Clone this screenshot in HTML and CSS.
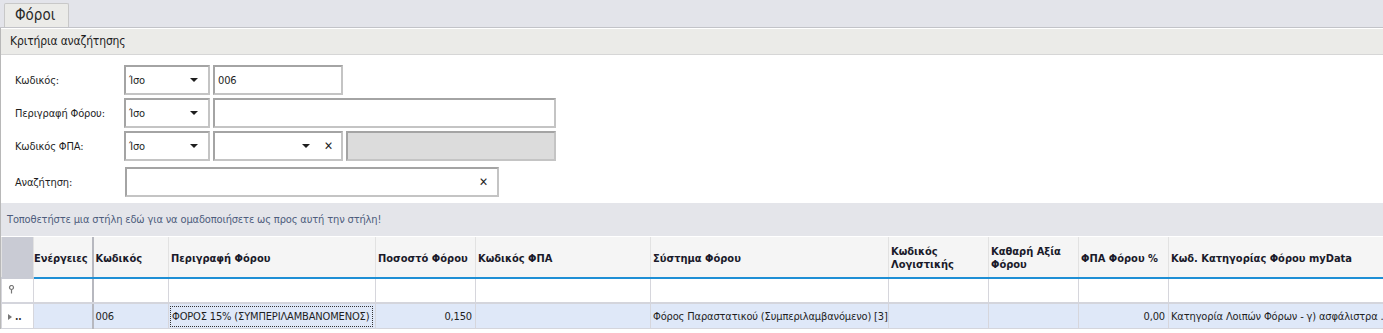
FILE: index.html
```html
<!DOCTYPE html>
<html>
  <head>
    <title>Φόροι</title>
    <link rel="stylesheet" href="styles.css">
  </head>
  <body>
    <div class="tabs">
      <div class="tab">Φόροι</div>
    </div>

    <div class="panel">
      <div class="panel-title">Κριτήρια αναζήτησης</div>

      <div class="criteria">
        <div class="crow">
          <label class="clabel">Κωδικός:</label>
          <div class="box op">Ίσο<span class="arrow"></span></div>
          <div class="box val-short">006</div>
        </div>
        <div class="crow">
          <label class="clabel">Περιγραφή Φόρου:</label>
          <div class="box op">Ίσο<span class="arrow"></span></div>
          <div class="box val-long"></div>
        </div>
        <div class="crow">
          <label class="clabel">Κωδικός ΦΠΑ:</label>
          <div class="box op">Ίσο<span class="arrow"></span></div>
          <div class="box val-short combo"><span class="arrow"></span><span class="clear">✕</span></div>
          <div class="box val-disabled"></div>
        </div>
        <div class="crow search">
          <label class="clabel">Αναζήτηση:</label>
          <div class="box val-search"><span class="clear">✕</span></div>
        </div>
      </div>

      <div class="group-panel">Τοποθετήστε μια στήλη εδώ για να ομαδοποιήσετε ως προς αυτή την στήλη!</div>

      <table class="grid">
        <colgroup>
          <col style="width: 32px">
          <col style="width: 59px">
          <col style="width: 76px">
          <col style="width: 207px">
          <col style="width: 100px">
          <col style="width: 175px">
          <col style="width: 238px">
          <col style="width: 100px">
          <col style="width: 90px">
          <col style="width: 90px">
          <col>
        </colgroup>
        <tr class="head">
          <th class="ind"></th>
          <th class="sep">Ενέργειες</th>
          <th>Κωδικός</th>
          <th>Περιγραφή Φόρου</th>
          <th>Ποσοστό Φόρου</th>
          <th>Κωδικός ΦΠΑ</th>
          <th>Σύστημα Φόρου</th>
          <th>Κωδικός Λογιστικής</th>
          <th>Καθαρή Αξία Φόρου</th>
          <th>ΦΠΑ Φόρου %</th>
          <th>Κωδ. Κατηγορίας Φόρου myData</th>
        </tr>
        <tr class="filter">
          <td class="ind">
            <svg width="7" height="9" viewBox="0 0 7 9"><circle cx="3.5" cy="2.5" r="2" fill="none" stroke="#777" stroke-width="1.2"/><line x1="3.5" y1="4.5" x2="3.5" y2="8.5" stroke="#777" stroke-width="1.2"/></svg>
          </td>
          <td class="sep"></td>
          <td></td><td></td><td></td><td></td><td></td><td></td><td></td><td></td><td></td>
        </tr>
        <tr class="row">
          <td class="ind"><span class="tri"></span><span class="dots">..</span></td>
          <td class="sep"></td>
          <td>006</td>
          <td><span class="focus">ΦΟΡΟΣ 15% (ΣΥΜΠΕΡΙΛΑΜΒΑΝΟΜΕΝΟΣ)</span></td>
          <td class="num">0,150</td>
          <td></td>
          <td>Φόρος Παραστατικού (Συμπεριλαμβανόμενο) [3]</td>
          <td></td>
          <td></td>
          <td class="num">0,00</td>
          <td>Κατηγορία Λοιπών Φόρων - γ) ασφάλιστρα .</td>
        </tr>
      </table>
    </div>
  </body>
</html>
```

FILE: styles.css
```css
body {
  margin: 0;
  font-family: "DejaVu Sans Condensed", "DejaVu Sans", sans-serif;
  font-size: 11px;
  letter-spacing: -0.15px;
  color: #1e1e1e;
  background-color: #fff;
  overflow: hidden;
}

.tabs {
  height: 27px;
  background-color: #e3e4ea;
  border-bottom: 1px solid #c2c3c8;
  display: flex;
  align-items: flex-end;
  padding-left: 4px;
}

.tab {
  width: 65px;
  height: 24px;
  box-sizing: border-box;
  background-color: #ebebe8;
  border: 1px solid #c8c8c8;
  border-bottom: none;
  border-radius: 2px 2px 0 0;
  font-size: 15px;
  letter-spacing: 0;
  line-height: 23px;
  padding-left: 10px;
  color: #2a2a2a;
}

.panel {
  border-left: 1px solid #b8b8b8;
}

.panel-title {
  height: 25px;
  line-height: 25px;
  background-color: #ebebe8;
  border-top: 1px solid #fff;
  border-bottom: 1px solid #d6d6d6;
  padding-left: 9px;
  font-size: 12px;
}

.criteria {
  padding: 10px 0 3px 0;
}

.crow {
  display: flex;
  align-items: center;
  gap: 3px;
  height: 30px;
  margin-bottom: 3px;
}

.clabel {
  width: 120px;
  padding-left: 14px;
  box-sizing: border-box;
  white-space: nowrap;
}

.box {
  height: 30px;
  box-sizing: border-box;
  border: 2px solid #a9a9a9;
  border-color: #a4a4a4 #c4c4c4 #c4c4c4 #a4a4a4;
  background-color: #fff;
  display: flex;
  align-items: center;
  padding-left: 3px;
  position: relative;
}

.op {
  width: 86px;
}

.val-short {
  width: 130px;
}

.val-long {
  width: 343px;
}

.val-disabled {
  width: 210px;
  background-color: #dcdcdc;
}

.arrow {
  position: absolute;
  right: 10px;
  top: 11px;
  width: 0;
  height: 0;
  border-left: 4px solid transparent;
  border-right: 4px solid transparent;
  border-top: 4px solid #1e1e1e;
}

.combo .arrow {
  right: 31px;
}

.clear {
  position: absolute;
  right: 8px;
  top: 6px;
  font-size: 12px;
  font-weight: bold;
}

.search {
  margin-top: 6px;
  height: 30px;
}

.search .clabel {
  width: 121px;
}

.val-search {
  width: 374px;
}

.search .clear {
  right: 9px;
}

.group-panel {
  height: 33px;
  line-height: 33px;
  background-color: #e4e5ea;
  color: #4d5c7c;
  padding-left: 6px;
}

.grid {
  border-collapse: collapse;
  table-layout: fixed;
  width: 100%;
  margin-top: 1px;
}

.grid th,
.grid td {
  border-left: 1px solid #d6d6dc;
  padding: 0 2px;
  text-align: left;
  white-space: nowrap;
  overflow: hidden;
}

.grid .head th {
  height: 38px;
  background-color: #f5f5f5;
  border-bottom: 2px solid #1e8fd5;
  border-left: 1px solid #e2e2e2;
  font-weight: bold;
  letter-spacing: 0;
  white-space: normal;
  line-height: 13px;
  color: #1a1a2a;
  padding-top: 2px;
}

.grid .head th.sep {
  padding-left: 0;
  padding-right: 0;
}

.grid .head th.ind {
  background-color: #c9cbd4;
  border-bottom: 2px solid #c9cbd4;
}

.grid th.sep,
.grid td.sep {
  border-right: 2px solid #b7b8bf;
}

.grid .filter td {
  height: 23px;
  border-bottom: 2px solid #d4d5dc;
}

.grid .row td {
  height: 24px;
  background-color: #dfe8f8;
  border-bottom: 1px solid #d4d5dc;
}

.grid td.ind {
  background-color: #fff;
  padding-left: 6px;
}

.grid .row td.ind {
  background-color: #fff;
}

.grid td.num {
  text-align: right;
  padding-right: 3px;
}

.tri {
  display: inline-block;
  width: 0;
  height: 0;
  border-top: 3px solid transparent;
  border-bottom: 3px solid transparent;
  border-left: 4px solid #777;
  margin-right: 3px;
}

.dots {
  font-weight: bold;
  color: #333;
  font-size: 10px;
}

.focus {
  display: block;
  border: 1px dotted #333;
  margin-left: -1px;
  padding: 3px 1px;
}
```
